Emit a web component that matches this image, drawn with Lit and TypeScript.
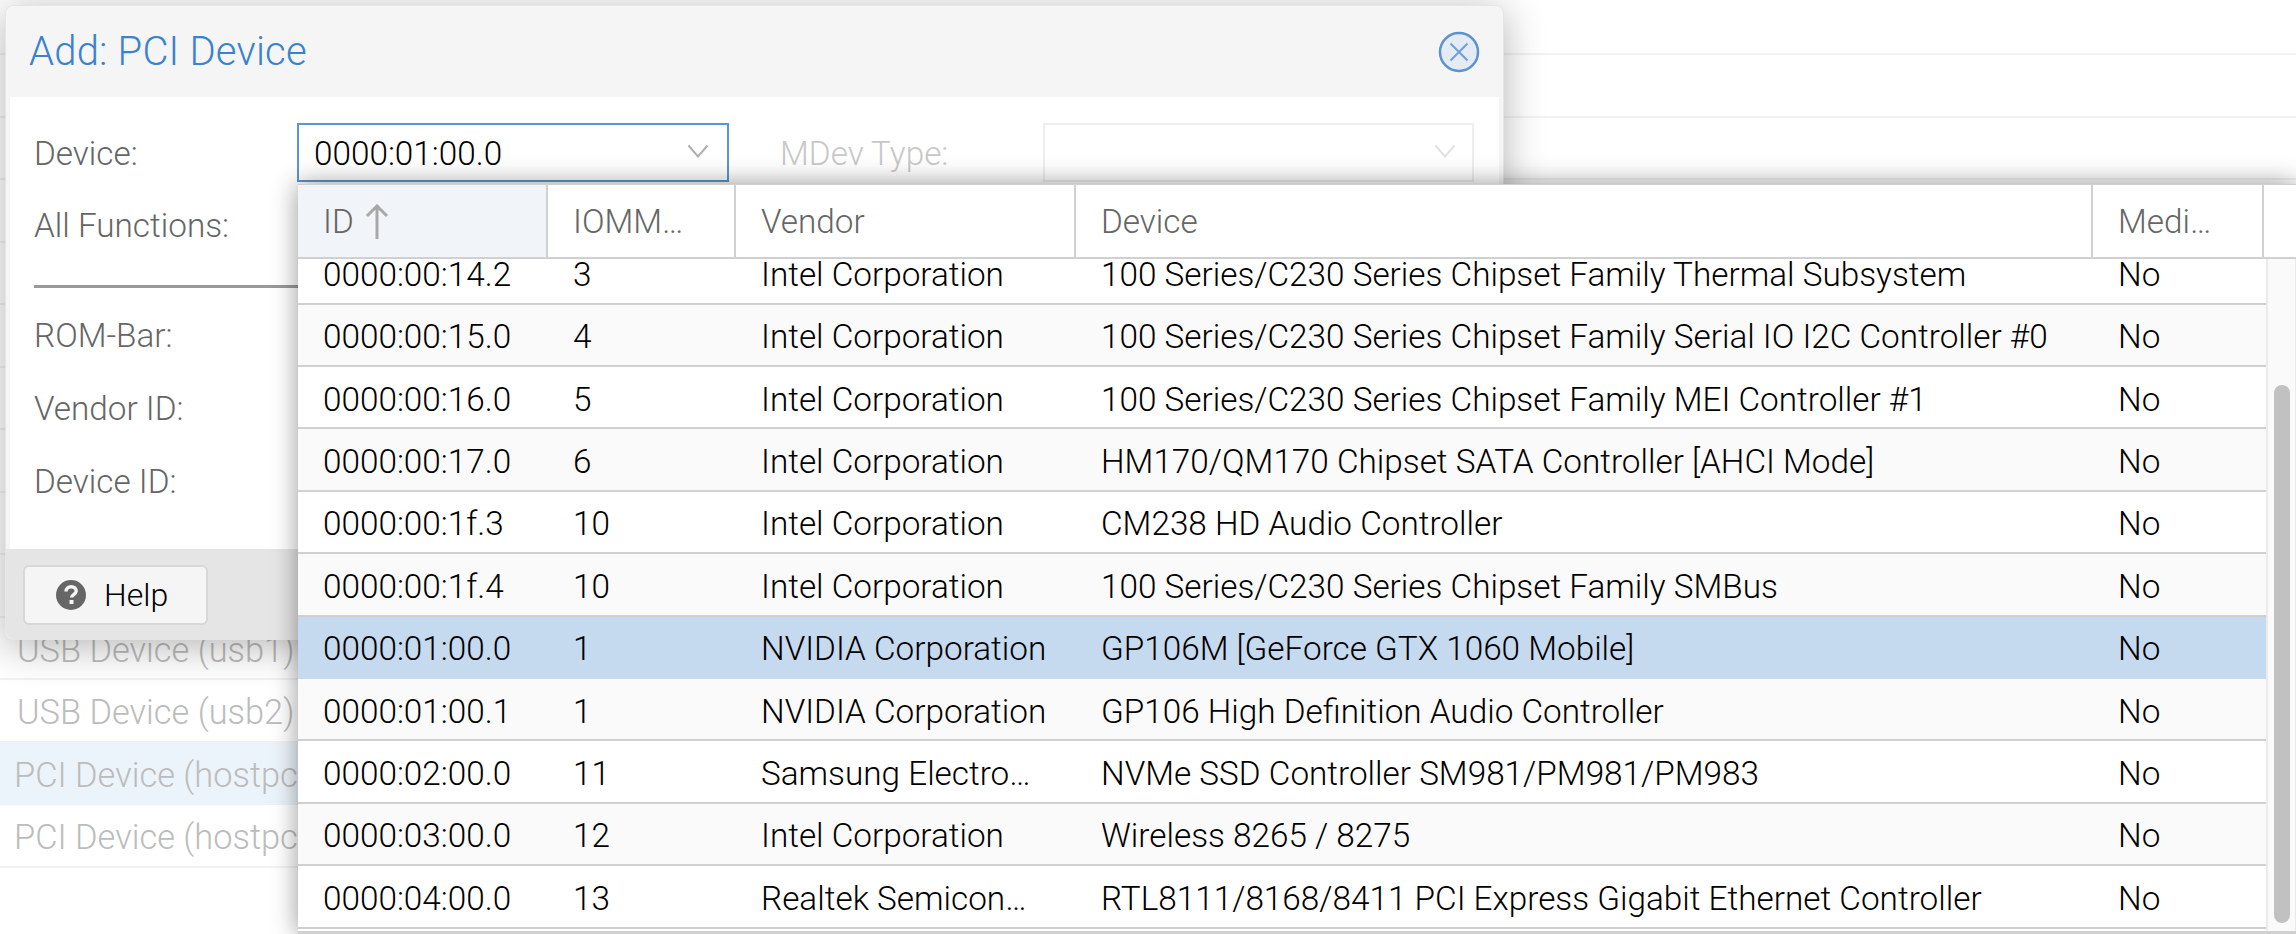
import { LitElement, html, css, svg } from 'lit';
import { customElement } from 'lit/decorators.js';
import { classMap } from 'lit/directives/class-map.js';

// rows of the device picker, last one sits on the bottom edge
const DEVICES = [
  ['0000:00:14.2', '3', 'Intel Corporation', '100 Series/C230 Series Chipset Family Thermal Subsystem'],
  ['0000:00:15.0', '4', 'Intel Corporation', '100 Series/C230 Series Chipset Family Serial IO I2C Controller #0'],
  ['0000:00:16.0', '5', 'Intel Corporation', '100 Series/C230 Series Chipset Family MEI Controller #1'],
  ['0000:00:17.0', '6', 'Intel Corporation', 'HM170/QM170 Chipset SATA Controller [AHCI Mode]'],
  ['0000:00:1f.3', '10', 'Intel Corporation', 'CM238 HD Audio Controller'],
  ['0000:00:1f.4', '10', 'Intel Corporation', '100 Series/C230 Series Chipset Family SMBus'],
  ['0000:01:00.0', '1', 'NVIDIA Corporation', 'GP106M [GeForce GTX 1060 Mobile]'],
  ['0000:01:00.1', '1', 'NVIDIA Corporation', 'GP106 High Definition Audio Controller'],
  ['0000:02:00.0', '11', 'Samsung Electro…', 'NVMe SSD Controller SM981/PM981/PM983'],
  ['0000:03:00.0', '12', 'Intel Corporation', 'Wireless 8265 / 8275'],
  ['0000:04:00.0', '13', 'Realtek Semicon…', 'RTL8111/8168/8411 PCI Express Gigabit Ethernet Controller'],
];

const HARDWARE = [
  ['', 0], ['', 0], ['', 0], ['', 0], ['', 0], ['', 0], ['', 0], ['', 0], ['', 0], ['', 0],
  ['USB Device (usb1)', 17], ['USB Device (usb2)', 17], ['PCI Device (hostpci0)', 14], ['PCI Device (hostpci1)', 14],
] as [string, number][];

const chevron = svg`<svg class="chev" width="22" height="14" viewBox="0 0 22 14"><path d="M1.5 1.5 11 12.5 20.5 1.5" fill="none" stroke="currentColor" stroke-width="2"/></svg>`;

@customElement('app-root')
export class AppRoot extends LitElement {
  static styles = css`
    :host {
      display: block;
      position: relative;
      width: 2296px;
      height: 934px;
      overflow: hidden;
      background: #fff;
      font-family: 'Roboto', 'Liberation Sans', sans-serif;
      font-weight: 300;
      font-size: 33.3px;
      color: #000;
    }
    /* faded grid behind the modal mask */
    .hw-row {
      box-sizing: border-box;
      height: 62.5px;
      padding-top: 4px;
      border-bottom: 2px solid #f2f2f2;
      display: flex;
      align-items: center;
      font-size: 34.4px;
      color: #bcbcbc;
      white-space: nowrap;
    }
    .hw-row:first-child { height: 55px; }
    .hw-row.sel { background: #ecf4fb; border-bottom-color: #ecf4fb; }

    .window {
      position: absolute;
      left: 5px;
      top: 5px;
      width: 1499px;
      height: 635px;
      box-sizing: border-box;
      display: flex;
      flex-direction: column;
      background: #f5f5f5;
      border: 1px solid #e6e6e6;
      border-radius: 8px;
      padding: 0 4px 0 4px;
      box-shadow: 0 6px 40px rgba(0, 0, 0, 0.3);
    }
    .head {
      height: 91px;
      flex: none;
      display: flex;
      align-items: center;
      justify-content: space-between;
      padding: 0 19px 0 19px;
    }
    .title { font-size: 40px; letter-spacing: 0.2px; color: #3a82cc; }
    .body {
      flex: 1;
      background: #fff;
      padding: 26px 24px 0;
    }
    .line {
      display: flex;
      align-items: center;
      color: #666;
      height: 59px;
    }
    .line .lbl { width: 263px; flex: none; padding-top: 2px; }
    .stack { margin-top: 13px; }
    .combo {
      box-sizing: border-box;
      width: 432px;
      height: 59px;
      border: 2px solid #5897d0;
      display: flex;
      align-items: center;
      justify-content: space-between;
      padding: 2px 18px 0 15px;
      color: #000;
    }
    .combo .chev { color: #b0b0b0; margin-bottom: 6px; }
    .mdev { color: #c8c8c8; margin-left: 51px; width: 263px; flex: none; padding-top: 2px; }
    .combo.off { width: 431px; border-color: #eee; padding-right: 16px; }
    .combo.off .chev { color: #e2e2e2; }
    .rule { height: 3px; width: 300px; background: #999; margin: 31px 0 0; }
    .line.tall { height: 73px; }
    .rom { margin-top: 10px; }
    .foot {
      box-sizing: border-box;
      height: 90px;
      flex: none;
      margin: 0 -4px;
      padding: 16px 0 0 17px;
      background: #e5e5e5;
      border-radius: 0 0 8px 8px;
    }
    .help {
      box-sizing: border-box;
      width: 185px;
      height: 60px;
      display: flex;
      align-items: center;
      gap: 17px;
      padding-left: 30px;
      font-size: 32px;
      border: 2px solid #d8d8d8;
      border-radius: 6px;
      background: #f5f5f5;
    }

    /* dropdown grid, floats over the window */
    .picker {
      position: absolute;
      left: 298px;
      top: 184px;
      width: 1998px;
      height: 750px;
      box-sizing: border-box;
      display: flex;
      flex-direction: column;
      background: #fff;
      border: 2px solid #d0d0d0;
      border-width: 0 0 3px 0;
      box-shadow: 0 0 24px rgba(0, 0, 0, 0.42);
    }
    .cols {
      display: grid;
      grid-template-columns: 250px 188px 340px 1017px 171px 32px;
    }
    .th {
      box-sizing: border-box;
      height: 75px;
      display: flex;
      align-items: center;
      gap: 11px;
      padding: 1px 0 0 25px;
      color: #666;
      white-space: nowrap;
      border-right: 2px solid #d0d0d0;
      border-bottom: 2px solid #d0d0d0;
      border-top: 1px solid #d0d0d0;
    }
    .th:last-child { border-right: none; }
    .th.sorted { background: #f1f5f9; }
    .scroll {
      flex: 1;
      min-height: 0;
      display: flex;
      overflow: hidden;
    }
    .rows {
      flex: 1;
      min-width: 0;
      display: flex;
      flex-direction: column;
      justify-content: flex-end;
      overflow: hidden;
      margin-bottom: 2.5px;
    }
    .row {
      box-sizing: border-box;
      flex: none;
      height: 62.4px;
      padding-top: 4px;
      display: grid;
      grid-template-columns: 250px 188px 340px 1017px 171px;
      align-items: center;
      border-bottom: 2px solid #d0d0d0;
    }
    .row.alt { background: #fafafa; }
    .row.sel { background: #c5d9ef; border-bottom-color: #c5d9ef; }
    .td {
      padding-left: 25px;
      white-space: nowrap;
    }
    .track {
      width: 30px;
      flex: none;
      box-sizing: border-box;
      background: #fafafa;
      border-left: 2px solid #ebebeb;
      border-right: 1px solid #ebebeb;
      padding-top: 126px;
      padding-left: 6px;
    }
    .thumb {
      width: 16px;
      height: 538px;
      background: #c1c1c1;
      border-radius: 8px;
    }
  `;

  render() {
    return html`
      <div class="hw">
        ${HARDWARE.map(
          ([name, pad], i) => html`<div
            class=${classMap({ 'hw-row': true, sel: i === 12 })}
            style="padding-left:${pad}px"
          >${name}</div>`
        )}
      </div>

      <div class="window">
        <div class="head">
          <span class="title">Add: PCI Device</span>
          <svg width="42" height="42" viewBox="0 0 42 42">
            <circle cx="21" cy="21" r="19" fill="#e4ebf4" stroke="#5b93cf" stroke-width="2.5"/>
            <path d="M12.5 12.5 29.5 29.5M29.5 12.5 12.5 29.5" stroke="#6f9fd6" stroke-width="2" fill="none"/>
          </svg>
        </div>
        <div class="body">
          <div class="line">
            <span class="lbl">Device:</span>
            <div class="combo"><span>0000:01:00.0</span>${chevron}</div>
            <span class="mdev">MDev Type:</span>
            <div class="combo off"><span></span>${chevron}</div>
          </div>
          <div class="line stack"><span class="lbl">All Functions:</span></div>
          <div class="rule"></div>
          <div class="line tall rom"><span class="lbl">ROM-Bar:</span></div>
          <div class="line tall"><span class="lbl">Vendor ID:</span></div>
          <div class="line tall"><span class="lbl">Device ID:</span></div>
        </div>
        <div class="foot">
          <div class="help">
            <svg width="32" height="32" viewBox="0 0 32 32">
              <circle cx="16" cy="16" r="15" fill="#666"/>
              <path d="M11 12.5c0-3 2.2-4.8 5.2-4.8 2.9 0 5 1.7 5 4.3 0 3.500-4.700 3.700-4.700 6.500" fill="none" stroke="#f5f5f5" stroke-width="3.4"/>
              <rect x="14.5" y="21" width="4" height="4" fill="#f5f5f5"/>
            </svg>
            <span>Help</span>
          </div>
        </div>
      </div>

      <div class="picker">
        <div class="cols">
          <div class="th sorted">
            <span>ID</span>
            <svg width="24" height="36" viewBox="0 0 24 36">
              <path d="M12 35V2M2 12 12 2 22 12" fill="none" stroke="#a8a8a8" stroke-width="3"/>
            </svg>
          </div>
          <div class="th">IOMM…</div>
          <div class="th">Vendor</div>
          <div class="th">Device</div>
          <div class="th">Medi…</div>
          <div class="th"></div>
        </div>
        <div class="scroll">
          <div class="rows">
            ${DEVICES.map(
              (d, i) => html`<div class=${classMap({ row: true, alt: i % 2 === 1, sel: i === 6 })}>
                <div class="td">${d[0]}</div>
                <div class="td">${d[1]}</div>
                <div class="td">${d[2]}</div>
                <div class="td">${d[3]}</div>
                <div class="td">No</div>
              </div>`
            )}
          </div>
          <div class="track"><div class="thumb"></div></div>
        </div>
      </div>
    `;
  }
}
